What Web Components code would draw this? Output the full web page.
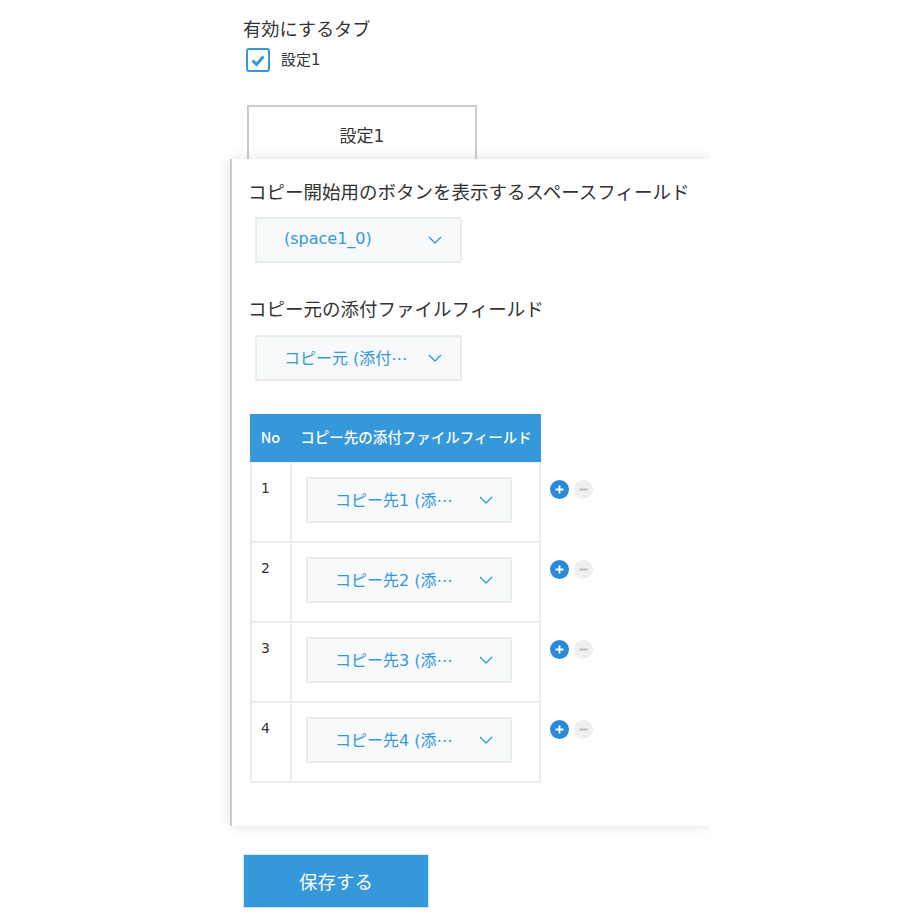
<!DOCTYPE html>
<html lang="ja">
<head>
<meta charset="utf-8">
<style>
  html, body { margin: 0; background: #fff; }
  body { font-family: "DejaVu Sans", "Noto Sans CJK JP", sans-serif; color: #333; }
</style>
</head>
<body>
<plugin-settings>
  <field-title slot="head" style="margin-left:13px;font-size:18.2px">有効にするタブ</field-title>
  <tab-checkbox slot="head">設定1</tab-checkbox>
  <tab-head slot="head">設定1</tab-head>

  <tab-panel>
    <field-title>コピー開始用のボタンを表示するスペースフィールド</field-title>
    <drop-select value="(space1_0)"></drop-select>
    <field-title style="margin-top:34px">コピー元の添付ファイルフィールド</field-title>
    <drop-select value="コピー元 (添付⋯" style="margin-top:16px"></drop-select>
    <copy-table>
      <copy-row no="1" value="コピー先1 (添⋯"></copy-row>
      <copy-row no="2" value="コピー先2 (添⋯"></copy-row>
      <copy-row no="3" value="コピー先3 (添⋯"></copy-row>
      <copy-row no="4" value="コピー先4 (添⋯"></copy-row>
    </copy-table>
  </tab-panel>

  <save-button slot="foot">保存する</save-button>
</plugin-settings>

<script>
  function define(name, html, setup) {
    customElements.define(name, class extends HTMLElement {
      constructor() {
        super();
        this.attachShadow({ mode: 'open' }).innerHTML = html;
      }
      connectedCallback() {
        if (setup) setup(this, this.shadowRoot);
      }
    });
  }

  define('plugin-settings', `
    <style>
      :host { display: block; width: 480px; margin-left: 230px; padding-top: 17px; }
      .foot { padding: 28px 0 0 13px; }
    </style>
    <slot name="head"></slot>
    <slot></slot>
    <div class="foot"><slot name="foot"></slot></div>
  `);

  define('field-title', `
    <style>
      :host { display: block; margin-left: -2px; font-family: "Noto Sans CJK JP", sans-serif; font-size: 18.5px; line-height: 22px; color: #333; white-space: nowrap; }
    </style>
    <slot></slot>
  `);

  define('tab-checkbox', `
    <style>
      :host { display: flex; align-items: center; gap: 11px; margin: 9px 0 0 16px; height: 24px; font-size: 15px; color: #333; }
      svg { display: block; width: 24px; height: 24px; }
      span { padding-bottom: 3px; }
    </style>
    <svg viewBox="0 0 24 24">
      <rect x="1" y="1" width="22" height="22" rx="2" fill="#fff" stroke="#3498db" stroke-width="2"/>
      <path d="M6.5 12.5l4 4 7-8" fill="none" stroke="#3498db" stroke-width="3"/>
    </svg>
    <span><slot></slot></span>
  `);

  define('tab-head', `
    <style>
      :host {
        display: flex; align-items: center; justify-content: center; box-sizing: border-box;
        width: 230px; height: 55px; margin: 33px 0 -1px 17px; padding-top: 1px;
        border: 2px solid #c8cdce; border-bottom: 0; background: #fff;
        font-size: 17px; color: #333;
      }
    </style>
    <slot></slot>
  `);

  define('tab-panel', `
    <style>
      :host {
        display: block; position: relative; box-sizing: border-box; height: 667px;
        padding: 21px 0 0 18px; background: #fff;
        border-left: 2px solid #c8cdce;
        box-shadow: 0 0 12px rgba(0,0,0,.12);
        clip-path: inset(-20px 0 -20px -20px);
      }
    </style>
    <slot></slot>
  `);

  define('drop-select', `
    <style>
      :host { display: block; box-sizing: border-box; width: 207px; height: 46px; margin: 15px 0 0 5px; border: 2px solid #e9edee; background: #f7f9fa; }
      .box { display: flex; align-items: center; height: 100%; padding-left: 27px; color: #3498db; font-size: 16px; }
      .text { flex: none; width: 126px; padding-bottom: 3px; white-space: nowrap; }
      svg { width: 14px; height: 8px; margin-left: 18px; }
    </style>
    <div class="box">
      <span class="text"></span>
      <svg viewBox="0 0 14 8"><path d="M1 1l6 6 6-6" fill="none" stroke="#3498db" stroke-width="1.3"/></svg>
    </div>
  `, function(host, root) {
    root.querySelector('.text').textContent = host.getAttribute('value');
  });

  define('copy-table', `
    <style>
      :host { display: block; width: 291px; margin-top: 33px; }
      .head { display: grid; grid-template-columns: 41px 250px; box-sizing: border-box; height: 49px; padding-bottom: 3px; align-items: center; background: #3498db; border-bottom: 1px solid #e9edee; color: #fff; font-family: "Noto Sans CJK JP", sans-serif; font-size: 14.5px; font-weight: 500; text-align: center; white-space: nowrap; }
    </style>
    <div class="head"><span>No</span><span>コピー先の添付ファイルフィールド</span></div>
    <slot></slot>
  `);

  define('copy-row', `
    <style>
      :host { display: grid; grid-template-columns: 42px 249px 60px; width: 351px; height: 80px; box-sizing: border-box; font-size: 14px; color: #333; }
      .no, .val { box-sizing: border-box; border: solid #e9edee; border-width: 0 2px 2px 0; }
      .no { border-left-width: 2px; padding: 15px 0 0 9px; line-height: 20px; }
      .btns { display: flex; gap: 5px; padding: 17px 0 0 9px; }
    </style>
    <div class="no"></div>
    <div class="val"></div>
    <div class="btns">
      <svg width="19" height="19" viewBox="0 0 19 19">
        <circle cx="9.5" cy="9.5" r="9.5" fill="#2b8ad6"/>
        <path d="M5.5 9.5h8M9.5 5.5v8" stroke="#fff" stroke-width="1.8"/>
      </svg>
      <svg width="19" height="19" viewBox="0 0 19 19">
        <circle cx="9.5" cy="9.5" r="9.5" fill="#efefef"/>
        <path d="M5.5 9.5h8" stroke="#b5b5b5" stroke-width="1.8"/>
      </svg>
    </div>
  `, function(host, root) {
    root.querySelector('.no').textContent = host.getAttribute('no');
    // created here so its value is set before it connects
    const sel = document.createElement('drop-select');
    sel.setAttribute('value', host.getAttribute('value'));
    sel.style.margin = '14px 0 0 14px';
    sel.style.width = '206px';
    root.querySelector('.val').appendChild(sel);
  });

  define('save-button', `
    <style>
      :host { display: flex; align-items: center; justify-content: center; box-sizing: border-box; width: 186px; height: 54px; background: #3498db; border: 1px solid #d4e6f4; color: #fff; font-family: "Noto Sans CJK JP", sans-serif; font-size: 18.5px; }
    </style>
    <slot></slot>
  `);
</script>
</body>
</html>
